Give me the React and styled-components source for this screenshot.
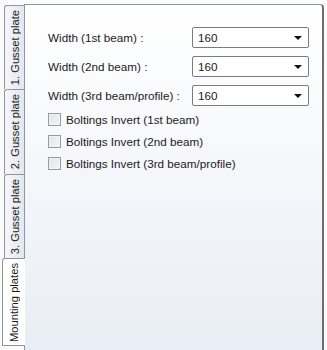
import React, { useState } from "react";
import styled, { createGlobalStyle, css } from "styled-components";

const Global = createGlobalStyle`
  html, body { margin: 0; padding: 0; background: #f4f5f8; }
  body { font-family: "Liberation Sans", Arial, sans-serif; font-size: 11.7px; color: #1b1b1b; }
`;

const Window = styled.div`
  width: 327px;
  height: 350px;
  display: flex;
  overflow: hidden;
  background: #fbfbfc;
`;

const TabStrip = styled.div`
  width: 24px;
  flex: none;
  display: flex;
  flex-direction: column;
  align-items: flex-end;
  padding-top: 5px;
  position: relative;
  z-index: 1;
`;

const Tab = styled.button`
  all: unset;
  box-sizing: border-box;
  width: 20px;
  height: ${(p) => p.$h}px;
  border: 1px solid #8d96a3;
  border-right: none;
  border-bottom: none;
  border-radius: 3px 0 0 0;
  background: linear-gradient(to right, #f6f7f9, #e3e7ee);
  display: flex;
  align-items: center;
  justify-content: center;
  cursor: default;
  ${(p) =>
    p.$active &&
    css`
      width: 23px;
      margin-right: -1px;
      background: #ffffff;
      border-bottom: 1px solid #8d96a3;
    `}
`;

const TabLabel = styled.span`
  writing-mode: vertical-rl;
  transform: rotate(180deg);
  white-space: nowrap;
  font-size: 11.2px;
  color: #1b1b1b;
`;

const Panel = styled.div`
  flex: none;
  width: 300px;
  margin-top: 4px;
  height: 360px;
  box-sizing: border-box;
  border: 1px solid #8d96a3;
  border-right: 2px solid #6e6e6e;
  border-radius: 0 4px 0 0;
  background: linear-gradient(to bottom, #ffffff 0%, #f6f8fb 40%, #e8ecf4 100%);
  padding: 22px 15px 0 23px;
`;

const Form = styled.div`
  display: grid;
  grid-template-columns: 144px 117px;
  row-gap: 8px;
  align-items: center;
`;

const Label = styled.span`
  white-space: nowrap;
`;

const Combo = styled.div`
  box-sizing: border-box;
  height: 21px;
  border: 1px solid #7b7b7b;
  border-radius: 2px;
  background: #fff;
  display: flex;
  align-items: center;
  padding: 0 6px 0 5px;
  justify-content: space-between;
`;

const Arrow = styled.span`
  width: 0;
  height: 0;
  border-left: 4px solid transparent;
  border-right: 4px solid transparent;
  border-top: 4px solid #111;
`;

const Checks = styled.div`
  display: flex;
  flex-direction: column;
  gap: 9px;
  margin-top: 7px;
`;

const CheckRow = styled.label`
  display: flex;
  align-items: center;
  gap: 5px;
  height: 13px;
`;

const Box = styled.span`
  box-sizing: border-box;
  width: 13px;
  height: 13px;
  border: 1px solid #9a9a9a;
  background: linear-gradient(135deg, #e2e2e2, #f6f6f6);
  box-shadow: inset 0 0 0 1px #f3f3f3;
`;

const tabs = [
  { label: "1. Gusset plate", h: 84 },
  { label: "2. Gusset plate", h: 85 },
  { label: "3. Gusset plate", h: 84 },
  { label: "Mounting plates", h: 88 },
];

const rows = ["Width (1st beam) :", "Width (2nd beam) :", "Width (3rd beam/profile) :"];
const checks = [
  "Boltings Invert (1st beam)",
  "Boltings Invert (2nd beam)",
  "Boltings Invert (3rd beam/profile)",
];

export default function App() {
  const [active, setActive] = useState(3);
  return (
    <>
      <Global />
      <Window>
        <TabStrip>
          {tabs.map((t, i) => (
            <Tab key={t.label} $h={t.h} $active={i === active} onClick={() => setActive(i)}>
              <TabLabel>{t.label}</TabLabel>
            </Tab>
          ))}
        </TabStrip>
        <Panel>
          <Form>
            {rows.map((r) => (
              <React.Fragment key={r}>
                <Label>{r}</Label>
                <Combo>
                  <span>160</span>
                  <Arrow />
                </Combo>
              </React.Fragment>
            ))}
          </Form>
          <Checks>
            {checks.map((c) => (
              <CheckRow key={c}>
                <Box />
                <span>{c}</span>
              </CheckRow>
            ))}
          </Checks>
        </Panel>
      </Window>
    </>
  );
}
